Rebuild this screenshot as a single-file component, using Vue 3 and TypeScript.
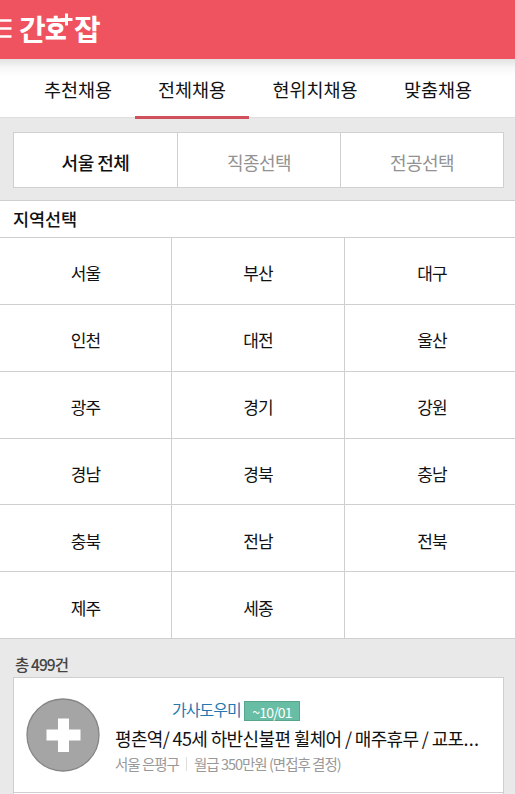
<script setup lang="ts">
interface Tab { label: string; width: number; active?: boolean }

const tabs: Tab[] = [
  { label: '추천채용', width: 114 },
  { label: '전체채용', width: 114, active: true },
  { label: '현위치채용', width: 132 },
  { label: '맞춤채용', width: 114 },
]
const filters: string[] = ['서울 전체', '직종선택', '전공선택']
const regions: string[] = [
  '서울', '부산', '대구', '인천', '대전', '울산', '광주', '경기', '강원',
  '경남', '경북', '충남', '충북', '전남', '전북', '제주', '세종', '',
]
</script>

<template>
  <div class="screen">
    <header class="header">
      <svg class="menu" width="12" height="22" viewBox="0 0 12 22" aria-hidden="true">
        <path d="M0 2.500H11.500M0 10.500H11.500M0 18.500H11.500" stroke="#fff" stroke-width="2.6" />
      </svg>
      <h1 class="logo">
        <span class="side">간</span><span class="mid"><b class="glyph">호</b><svg class="cross" width="13" height="13" viewBox="0 0 13 13"><path d="M6.500 0.500V12.500M0.500 6.500H12.500" stroke="#fff" stroke-width="3" /></svg></span><span class="side">잡</span>
      </h1>
    </header>

    <nav class="tabs">
      <a v-for="t in tabs" :key="t.label" class="tab" :class="{ active: t.active }" :style="{ width: t.width + 'px' }">{{ t.label }}</a>
    </nav>

    <div class="filters">
      <button v-for="(f, i) in filters" :key="f" class="filter" :class="{ chosen: i === 0 }">{{ f }}</button>
    </div>

    <section class="regions">
      <h2 class="heading">지역선택</h2>
      <div class="grid">
        <div v-for="(r, i) in regions" :key="i" class="cell">{{ r }}</div>
      </div>
    </section>

    <p class="count">총 499건</p>

    <main class="list">
      <article class="job">
        <svg class="avatar" width="74" height="74" viewBox="0 0 74 74" aria-hidden="true">
          <circle cx="37" cy="37" r="36" fill="#a5a5a5" stroke="#858585" stroke-width="1.3" />
          <path d="M32 20.500h11v11h11.500v11H43V54H32V42.500H20.500v-11H32z" fill="#fff" />
        </svg>
        <div class="info">
          <div class="top"><span class="kind">가사도우미</span><span class="date">~10/01</span></div>
          <div class="title">평촌역/ 45세 하반신불편 휠체어 / 매주휴무 / 교포<span class="dots">...</span></div>
          <div class="meta"><span>서울 은평구</span><i class="bar"></i><span class="pay">월급 350만원 (면접후 결정)</span></div>
        </div>
      </article>
    </main>
  </div>
</template>

<style>
body { margin: 0; overflow: hidden; }
</style>

<style scoped>
* { box-sizing: border-box; }
.screen {
  width: 515px;
  height: 794px;
  overflow: hidden;
  display: flex;
  flex-direction: column;
  background: #e9e9e9;
  color: #111;
  font-family: "Noto Sans CJK KR", sans-serif;
}
.header {
  flex: none;
  height: 59px;
  display: flex;
  align-items: center;
  background: #ee535f;
}
.menu { flex: none; margin-top: -1px; }
.logo {
  display: flex;
  margin: -3px 0 0 7px;
  color: #fff;
  font-size: 29px;
  font-weight: 700;
  line-height: 44px;
}
.side { width: 26px; }
.mid { position: relative; width: 29px; }
.glyph { display: block; width: 22px; font-size: 23.500px; line-height: 43px; transform: scaleY(1.18); }
.cross { position: absolute; left: 15px; top: 7px; }
.tabs {
  flex: none;
  height: 59px;
  display: flex;
  padding-left: 21px;
  border-bottom: 1px solid #dedede;
  background: linear-gradient(#e3e1e1, #f6f6f6 8px, #fff 17px);
}
.tab {
  height: 60px;
  text-align: center;
  font-size: 18.5px;
  line-height: 61px;
  white-space: nowrap;
}
.tab.active { border-bottom: 3px solid #d0515b; }
.filters {
  flex: none;
  display: grid;
  grid-template-columns: 164px 163px 1fr;
  height: 56px;
  margin: 14px 11px 0 13px;
  border: 1px solid #d0d0d0;
  background: #fff;
}
.filter {
  padding: 4px 0 0;
  border: 0;
  border-right: 1px solid #d0d0d0;
  background: none;
  color: #929292;
  font: 400 18px/50px "Noto Sans CJK KR", sans-serif;
  letter-spacing: -0.5px;
}
.filter:last-child { border-right: 0; }
.filter.chosen { color: #111; font-weight: 500; }
.regions { flex: none; margin-top: 12px; border-top: 1px solid #cfcfcf; background: #fff; }
.heading {
  height: 36px;
  margin: 0;
  padding-left: 13px;
  font-size: 17.500px;
  font-weight: 500;
  line-height: 36px;
  letter-spacing: -0.1px;
}
.grid {
  height: 402px;
  display: grid;
  grid-template-columns: 172px 173px 1fr;
  grid-template-rows: repeat(6, 1fr);
  border-top: 1px solid #cfcfcf;
}
.cell {
  display: flex;
  align-items: center;
  justify-content: center;
  padding-top: 4px;
  border-right: 1px solid #cfcfcf;
  border-bottom: 1px solid #cfcfcf;
  font-size: 17px;
  letter-spacing: -0.8px;
}
.cell:nth-child(3n) { border-right: 0; padding-left: 4px; }
.count {
  flex: none;
  height: 38px;
  margin: 0;
  padding: 12px 0 0 15px;
  color: #444;
  font-size: 15.500px;
  font-weight: 500;
  line-height: 27px;
  letter-spacing: -0.9px;
}
.list {
  flex: none;
  height: 130px;
  margin: 0 11px 0 13px;
  border: 1px solid #cfcfcf;
  background: #fff;
}
.job { display: flex; height: 115px; border-bottom: 1px solid #cfcfcf; }
.avatar { flex: none; margin: 20px 0 0 12px; }
.info { padding: 20px 0 0 15px; white-space: nowrap; }
.top { display: flex; height: 26px; padding-left: 57px; }
.kind { width: 72px; color: #2478ae; font-size: 16px; line-height: 23px; letter-spacing: -1px; }
.date {
  width: 56px;
  height: 20px;
  margin-top: 3px;
  border: 1px solid #58a58e;
  background: #68bea4;
  color: #fff;
  font-size: 14px;
  line-height: 20px;
  text-align: center;
  letter-spacing: -0.8px;
}
.title { height: 29px; font-size: 18px; line-height: 29px; letter-spacing: -0.63px; }
.dots { letter-spacing: 0.2px; }
.meta { display: flex; align-items: center; color: #999; font-size: 14.500px; line-height: 21px; letter-spacing: -1px; }
.bar { width: 1px; height: 14px; margin: 0 7px; background: #ddd; }
</style>
